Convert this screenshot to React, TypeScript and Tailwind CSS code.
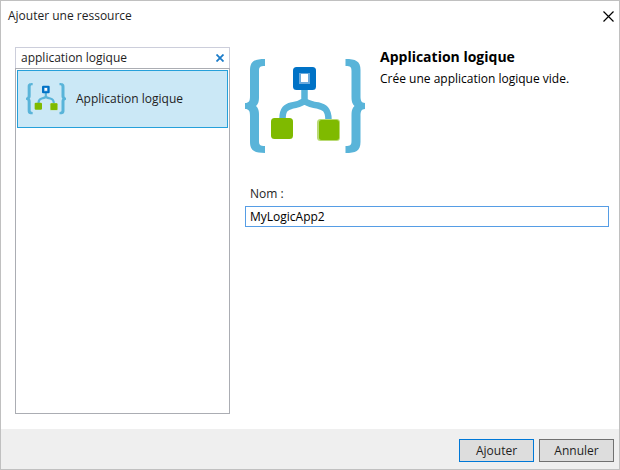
import { useState } from "react";

function LogicAppIcon({ className }: { className: string }) {
  const brace =
    "M20 0V7C15 7 14 8 14 12V38C14 43 13 45 11 47C13 49 14 51 14 56V82C14 86 15 87 20 87V94C10 94 5 92 5 83V57C5 52 4 50 0 50V44C4 44 5 42 5 37V11C5 2 10 0 20 0Z";
  return (
    <svg viewBox="0 0 120 94" className={className} aria-hidden="true">
      <path d={brace} fill="#59b4d9" />
      <path d={brace} fill="#59b4d9" transform="translate(120.5 0) scale(-1 1)" />
      <path
        d="M59.5 28V42C55 45 51 46 47 46.500C41 48 37.500 50 37.500 60M59.500 42C64 45 69 46 73 46.500C79 48 83.500 50 83.500 61"
        fill="none"
        stroke="#59b4d9"
        strokeWidth="6.5"
      />
      <rect x="48" y="8" width="23" height="23" rx="3.500" fill="#0072c6" />
      <rect x="54" y="14" width="11" height="11" fill="#6aaadd" />
      <rect x="56" y="15" width="7" height="8" fill="#fff" />
      <rect x="26" y="59" width="22" height="21" rx="3.500" fill="#7fba00" />
      <rect x="72" y="60" width="23" height="22" rx="3.500" fill="#b9da74" />
      <rect x="74" y="61" width="20" height="20" rx="2.500" fill="#7fba00" />
    </svg>
  );
}

export default function App() {
  const [query, setQuery] = useState("application logique");
  const [name, setName] = useState("MyLogicApp2");

  return (
    <div className="flex min-h-screen flex-col border border-[#c0c0c0] bg-white font-['Open_Sans','Noto_Sans',sans-serif] text-xs text-[#1e1e1e]">
      <header className="flex h-[30px] items-center justify-between pl-[7px] pr-1">
        <h1>Ajouter une ressource</h1>
        <button type="button" aria-label="Fermer" className="p-px text-black">
          <svg viewBox="0 0 11 11" className="size-[11px]" fill="none" stroke="currentColor" strokeWidth="1.2">
            <path d="M.5 .5l10 10M10.500 .5l-10 10" />
          </svg>
        </button>
      </header>

      <main className="flex grow gap-[15px] pt-4 pr-[10px] pb-[15px] pl-[14px]">
        <section className="flex w-[215px] shrink-0 flex-col">
          <div className="flex h-[21px] items-center border border-b-0 border-[#cccedb] px-[5px]">
            <input
              type="text"
              aria-label="Rechercher"
              value={query}
              onChange={(e) => setQuery(e.target.value)}
              className="min-w-0 grow outline-none"
            />
            <button type="button" aria-label="Effacer" onClick={() => setQuery("")} className="text-[#1c7cc9]">
              <svg viewBox="0 0 8 8" className="size-2" fill="none" stroke="currentColor" strokeWidth="1.8">
                <path d="M.5 .5l7 7M7.500 .5l-7 7" />
              </svg>
            </button>
          </div>
          <ul className="grow border border-[#abadb3] p-px">
            <li>
              <button
                type="button"
                className="flex h-[58px] w-full items-center gap-[10px] border border-[#26a0da] bg-[#cbe8f6] px-2 text-left"
              >
                <LogicAppIcon className="w-10" />
                Application logique
              </button>
            </li>
          </ul>
        </section>

        <section className="grow">
          <div className="flex gap-[15px]">
            <LogicAppIcon className="mt-3 w-[120px] shrink-0" />
            <div className="text-black">
              <h2 className="text-sm leading-5 font-bold">Application logique</h2>
              <p className="mt-1 leading-4">Crée une application logique vide.</p>
            </div>
          </div>
          <label htmlFor="resource-name" className="mt-8 block pl-[5px] leading-[18px]">
            Nom :
          </label>
          <input
            id="resource-name"
            type="text"
            value={name}
            onChange={(e) => setName(e.target.value)}
            className="mt-[3px] block h-[21px] w-full border border-[#569de5] px-1 text-black outline-none"
          />
        </section>
      </main>

      <footer className="flex h-10 items-center justify-end gap-[5px] bg-[#efefef] pt-[3px] pr-[5px]">
        <button type="button" className="h-[23px] w-[75px] border border-[#0078d7] bg-[#dddddd]">
          Ajouter
        </button>
        <button type="button" className="h-[23px] w-[75px] border border-[#707070] bg-[#dddddd]">
          Annuler
        </button>
      </footer>
    </div>
  );
}
